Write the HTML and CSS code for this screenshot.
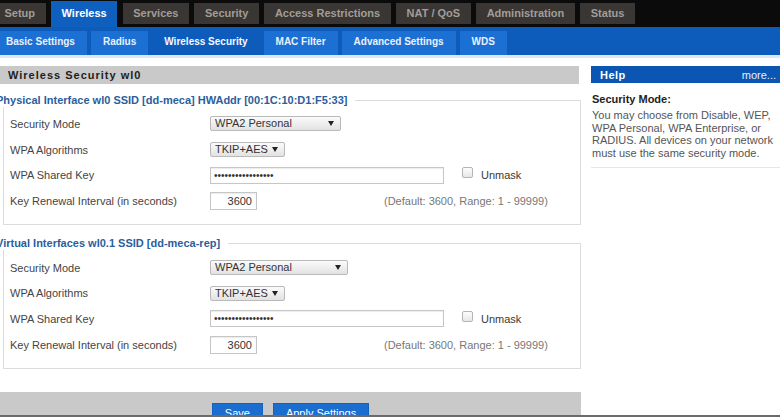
FILE: index.html
```html
<!DOCTYPE html>
<html>
<head>
<meta charset="utf-8">
<title>Wireless Security</title>
<link rel="stylesheet" href="styles.css">
</head>
<body>
<header class="topnav">
  <ul class="tabs">
    <li class="tab">Setup</li>
    <li class="tab active">Wireless</li>
    <li class="tab">Services</li>
    <li class="tab">Security</li>
    <li class="tab">Access Restrictions</li>
    <li class="tab">NAT / QoS</li>
    <li class="tab">Administration</li>
    <li class="tab">Status</li>
  </ul>
</header>
<nav class="subnav">
  <ul class="subtabs">
    <li class="subtab">Basic Settings</li>
    <li class="subtab">Radius</li>
    <li class="subtab active">Wireless Security</li>
    <li class="subtab">MAC Filter</li>
    <li class="subtab">Advanced Settings</li>
    <li class="subtab">WDS</li>
  </ul>
</nav>
<div class="page">
  <main class="main">
    <h2 class="sechead">Wireless Security wl0</h2>
    <fieldset class="group">
      <legend>Physical Interface wl0 SSID [dd-meca] HWAddr [00:1C:10:D1:F5:33]</legend>
      <div class="row">
        <span class="label">Security Mode</span>
        <div class="ctl"><span class="select w-mode">WPA2 Personal<span class="caret"></span></span></div>
      </div>
      <div class="row">
        <span class="label">WPA Algorithms</span>
        <div class="ctl"><span class="select w-alg">TKIP+AES<span class="caret"></span></span></div>
      </div>
      <div class="row">
        <span class="label">WPA Shared Key</span>
        <div class="ctl"><input class="key" type="password" value="xxxxxxxxxxxxxxxxx" readonly><span class="check"></span><span class="unmask">Unmask</span></div>
      </div>
      <div class="row">
        <span class="label">Key Renewal Interval (in seconds)</span>
        <div class="ctl"><input class="num" type="text" value="3600" readonly><span class="hint">(Default: 3600, Range: 1 - 99999)</span></div>
      </div>
    </fieldset>
    <fieldset class="group second">
      <legend>Virtual Interfaces wl0.1 SSID [dd-meca-rep]</legend>
      <div class="row">
        <span class="label">Security Mode</span>
        <div class="ctl"><span class="select w-mode2">WPA2 Personal<span class="caret"></span></span></div>
      </div>
      <div class="row">
        <span class="label">WPA Algorithms</span>
        <div class="ctl"><span class="select w-alg">TKIP+AES<span class="caret"></span></span></div>
      </div>
      <div class="row">
        <span class="label">WPA Shared Key</span>
        <div class="ctl"><input class="key" type="password" value="xxxxxxxxxxxxxxxxx" readonly><span class="check"></span><span class="unmask">Unmask</span></div>
      </div>
      <div class="row">
        <span class="label">Key Renewal Interval (in seconds)</span>
        <div class="ctl"><input class="num" type="text" value="3600" readonly><span class="hint">(Default: 3600, Range: 1 - 99999)</span></div>
      </div>
    </fieldset>
    <div class="footer">
      <button class="btn">Save</button>
      <button class="btn">Apply Settings</button>
    </div>
  </main>
  <aside class="help">
    <div class="helphead"><span class="helptitle">Help</span><span class="more">more...</span></div>
    <h3 class="helpsub">Security Mode:</h3>
    <p class="helptext">You may choose from Disable, WEP, WPA Personal, WPA Enterprise, or RADIUS. All devices on your network must use the same security mode.</p>
    <div class="helprule"></div>
  </aside>
</div>
<div class="bottomline"></div>
</body>
</html>
```
FILE: styles.css
```css
* { box-sizing: border-box; }
html, body {
  margin: 0;
  padding: 0;
  background: #fff;
  overflow: hidden;
}
body {
  width: 780px;
  height: 417px;
  font-family: "Liberation Sans", Arial, sans-serif;
  font-size: 11px;
  color: #444;
}
ul { list-style: none; margin: 0; padding: 0; }

/* top navigation */
.topnav {
  background: #0b0b0b;
  height: 27px;
}
.tabs {
  display: flex;
  gap: 5.5px;
  margin-left: -6px;
  height: 27px;
  align-items: flex-start;
}
.tab {
  margin-top: 3px;
  height: 21px;
  line-height: 21px;
  padding: 0 10.5px;
  background: #3a3633;
  color: #a19d99;
  font-weight: bold;
  font-size: 11px;
  white-space: nowrap;
}
.tab.active {
  margin-top: 1px;
  height: 26px;
  line-height: 24px;
  background: #0f5fbf;
  color: #fff;
}

/* sub navigation */
.subnav {
  background: #0d5cbc;
  height: 28px;
  border-bottom: 3px solid #dce8f5;
  box-sizing: content-box;
}
.subtabs {
  display: flex;
  gap: 4px;
  margin-left: -6px;
  height: 28px;
  align-items: flex-end;
}
.subtab {
  height: 24px;
  line-height: 22px;
  padding: 0 12px;
  background: #1c70d4;
  color: #e8f0fb;
  font-weight: bold;
  font-size: 10px;
  white-space: nowrap;
}
.subtab.active {
  background: #0d5cbc;
  color: #f4f8ff;
}

/* page */
.page {
  display: flex;
  gap: 10px;
  margin-top: 8px;
}
.main {
  width: 581px;
  flex: none;
}
.sechead {
  margin: 0;
  height: 18px;
  line-height: 18px;
  padding-left: 8px;
  background: #c9c9c9;
  color: #1e1e1e;
  font-size: 11px;
  font-weight: bold;
  letter-spacing: 1px;
  width: 579px;
}
.group {
  margin: 10px 0 0 3px;
  padding: 4px 5px 10px 6px;
  border: 1px solid #dcdcdc;
  min-width: 0;
}
.group.second {
  margin-top: 12px;
  padding-top: 5px;
  padding-bottom: 10px;
}
.group legend {
  margin-left: -14px;
  padding: 0 8px 0 0;
  color: #2b5e9c;
  font-weight: bold;
  font-size: 11px;
  line-height: 13px;
}
.row {
  display: grid;
  grid-template-columns: 200px 1fr;
  align-items: center;
  height: 25.7px;
}
.label {
  color: #444;
  white-space: nowrap;
}
.ctl {
  display: flex;
  align-items: center;
}
.select {
  display: flex;
  align-items: center;
  justify-content: space-between;
  height: 15px;
  padding: 0 6px 0 4px;
  border: 1px solid #b9b9b9;
  border-radius: 2px;
  background: linear-gradient(#fbfbfb, #e2e2e2);
  color: #333;
  font-size: 11px;
  line-height: 13px;
}
.w-mode { width: 131px; }
.w-mode2 { width: 138px; }
.w-alg { width: 75px; }
.caret {
  width: 0;
  height: 0;
  border-left: 3px solid transparent;
  border-right: 3px solid transparent;
  border-top: 5px solid #222;
}
.key {
  width: 234px;
  height: 17px;
  padding: 0 3px;
  margin: 0;
  border: 1px solid #c6c6c6;
  border-radius: 0;
  box-shadow: inset 0 1px 1px rgba(0,0,0,0.08);
  font-family: "Liberation Sans", Arial, sans-serif;
  font-size: 10px;
  color: #333;
  letter-spacing: 0;
  background: #fff;
  outline: none;
}
.check {
  width: 11px;
  height: 11px;
  margin-left: 18px;
  margin-top: -5px;
  border: 1px solid #b4b4b4;
  border-radius: 2px;
  background: linear-gradient(#fdfdfd, #e6e6e6);
}
.unmask {
  margin-left: 8px;
  color: #3a3a3a;
}
.num {
  width: 47px;
  height: 18px;
  margin: 0;
  padding: 0 4px 0 2px;
  border: 1px solid #c6c6c6;
  border-radius: 0;
  box-shadow: inset 0 1px 1px rgba(0,0,0,0.08);
  text-align: right;
  font-family: "Liberation Sans", Arial, sans-serif;
  font-size: 11px;
  color: #333;
  background: #fff;
  outline: none;
}
.hint {
  margin-left: 127px;
  color: #777;
  white-space: nowrap;
}

.footer {
  margin-top: 23px;
  height: 40px;
  padding-top: 11px;
  background: #c9c9c9;
  display: flex;
  justify-content: center;
  gap: 10px;
}
.btn {
  height: 20px;
  padding: 0 12px;
  margin: 0;
  border: 1px solid #1460bd;
  border-radius: 0;
  background: #1b6dd0;
  color: #fff;
  font-family: "Liberation Sans", Arial, sans-serif;
  font-size: 11px;
  line-height: 18px;
}

/* help */
.help {
  width: 189px;
  flex: none;
}
.helphead {
  display: flex;
  justify-content: space-between;
  align-items: center;
  height: 17px;
  padding: 0 4px 0 9px;
  background: #0a56b2;
  color: #fff;
}
.helptitle {
  font-weight: bold;
  letter-spacing: 0.5px;
}
.more {
  color: #e6eefa;
}
.helpsub {
  margin: 10px 0 0 1px;
  font-size: 11px;
  line-height: 13px;
  font-weight: bold;
  color: #222;
}
.helptext {
  margin: 3px 0 0 1px;
  line-height: 12.7px;
  color: #555;
}
.helprule {
  margin-top: 7px;
  height: 1px;
  background: #e6e6e6;
}

.bottomline {
  position: fixed;
  left: 0;
  right: 0;
  bottom: 0;
  height: 2px;
  background: #6a6a6a;
}
```
